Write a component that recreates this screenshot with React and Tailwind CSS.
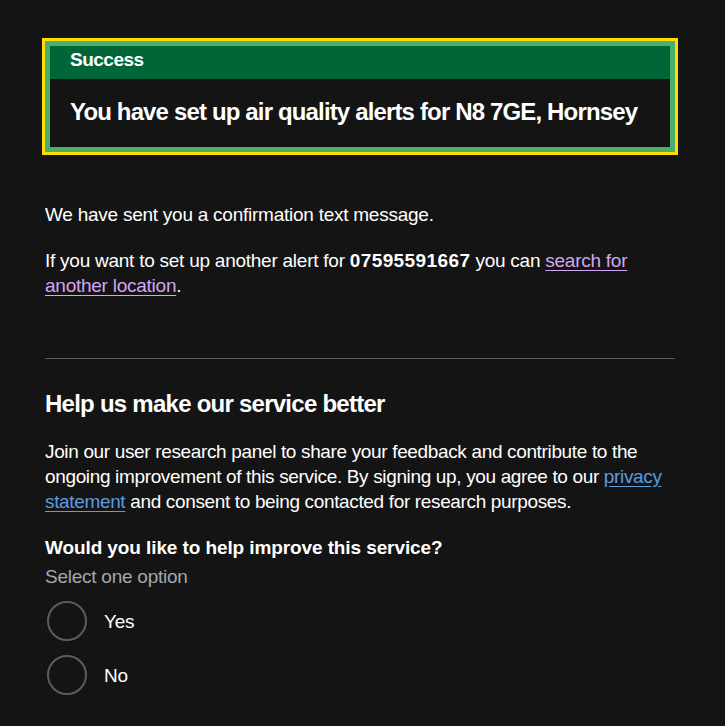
import React, { useState } from "react";

const options = ["Yes", "No"];

const App = () => {
	const [choice, setChoice] = useState(null);

	return (
		<div
			className="min-h-screen bg-[#141414] text-white px-[45px] pt-[41px] pb-[40px] tracking-[-0.25px]"
			style={{ fontFamily: '"Liberation Sans", Arial, sans-serif' }}
		>
			<div className="w-[630px]">
				{/* Success banner */}
				<div className="border-[5px] border-[#4aaf6d] bg-[#006637] shadow-[0_0_0_3px_#ffdd00]">
					<div className="px-[20px] pt-[1px] pb-[6px] border-b border-[#006637]">
						<h2 className="text-[19px] leading-[25px] font-bold tracking-[-0.5px]">
							Success
						</h2>
					</div>
					<div className="bg-[#141414] px-[20px] pt-[18px] pb-[20px]">
						<p className="text-[24px] leading-[30px] font-bold tracking-[-0.85px]">
							You have set up air quality alerts for N8 7GE, Hornsey
						</p>
					</div>
				</div>

				<p className="mt-[50px] text-[19px] leading-[25px]">
					We have sent you a confirmation text message.
				</p>
				<p className="mt-[21px] text-[19px] leading-[25px]">
					If you want to set up another alert for{" "}
					<strong className="font-bold tracking-[0.4px]">07595591667</strong> you can{" "}
					<a href="#" className="text-[#d4a6ef] underline underline-offset-[3px]">
						search for another location
					</a>
					.
				</p>

				<hr className="mt-[60px] border-0 border-t border-[#5b5b5b]" />

				{/* Research panel */}
				<h2 className="mt-[30px] text-[24px] leading-[30px] font-bold tracking-[-0.75px]">
					Help us make our service better
				</h2>
				<p className="mt-[20px] text-[19px] leading-[25px] tracking-[-0.35px]">
					Join our user research panel to share your feedback and
					contribute to the ongoing improvement of this service. By
					signing up, you agree to our{" "}
					<a href="#" className="text-[#5a9de0] underline underline-offset-[3px]">
						privacy statement
					</a>{" "}
					and consent to being contacted for research purposes.
				</p>

				<fieldset className="mt-[21px]">
					<legend className="text-[19px] leading-[25px] font-bold tracking-[-0.1px]">
						Would you like to help improve this service?
					</legend>
					<div className="mt-[4px] text-[19px] leading-[25px] text-[#a3a9ad]">
						Select one option
					</div>
					<div className="mt-[12px] flex flex-col gap-[14px]">
						{options.map((opt) => (
							<label
								key={opt}
								className="flex items-center gap-[17px] cursor-pointer"
								onClick={() => setChoice(opt)}
							>
								<span className="ml-[2px] w-[40px] h-[40px] rounded-full border-2 border-[#5c5c5c] flex items-center justify-center">
									{choice === opt && (
										<span className="w-[20px] h-[20px] rounded-full bg-white" />
									)}
								</span>
								<span className="text-[19px] leading-[25px]">{opt}</span>
							</label>
						))}
					</div>
				</fieldset>
			</div>
		</div>
	);
};

export default App;
